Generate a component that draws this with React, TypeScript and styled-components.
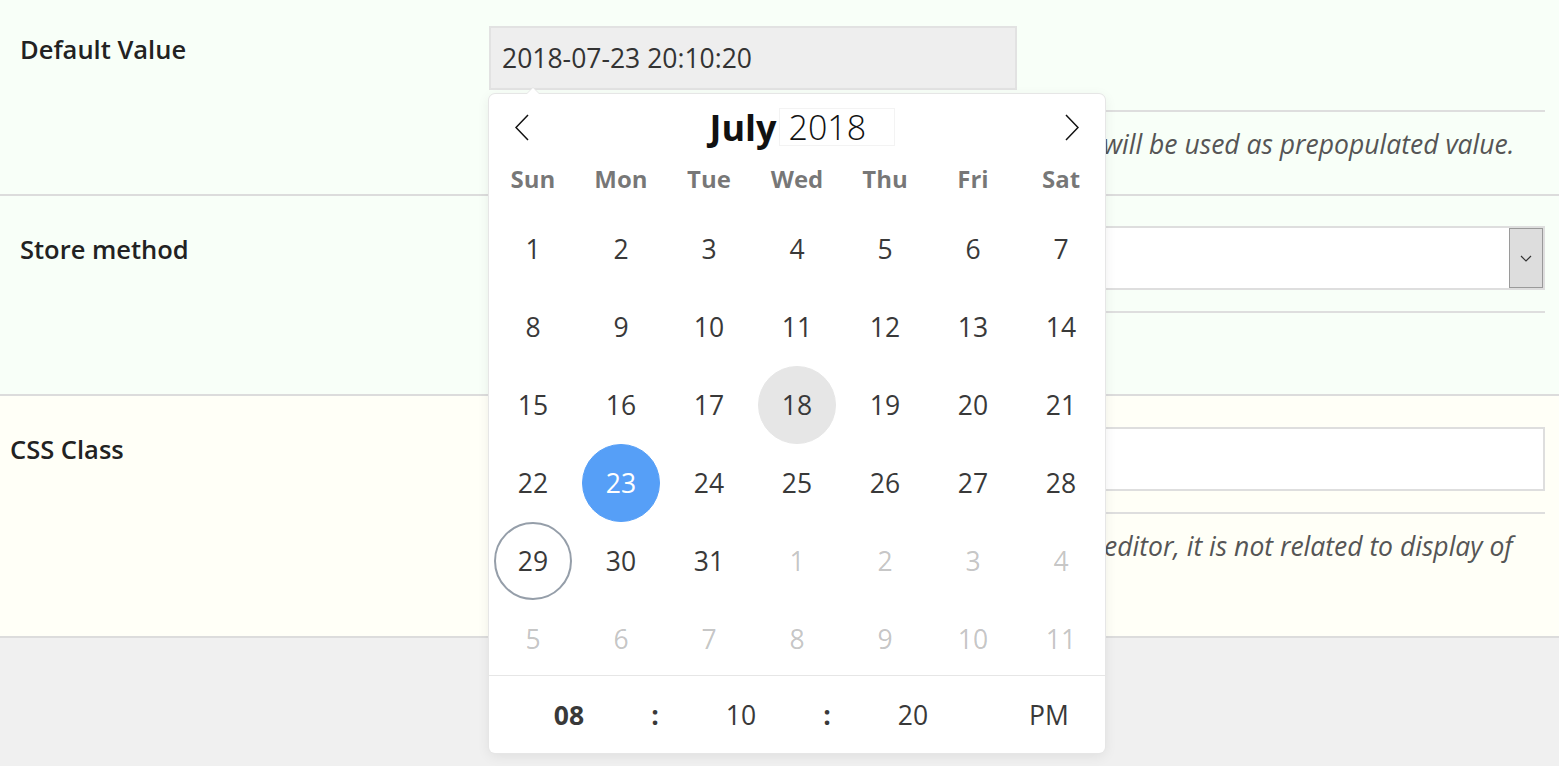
import React from 'react';
import styled, { createGlobalStyle, css } from 'styled-components';

const GlobalStyle = createGlobalStyle`
  html, body {
    margin: 0;
    padding: 0;
    background: #f0f0f0;
  }
  body {
    font-family: "Open Sans", "Noto Sans", "Liberation Sans", sans-serif;
    color: #222;
  }
`;

const Page = styled.div`
  position: relative;
  width: 1559px;
  height: 766px;
  overflow: hidden;
  background: #f0f0f0;
`;

const Row = styled.section<{ $bg: string; $minHeight: number; $padTop: number }>`
  display: grid;
  grid-template-columns: 489px 1fr;
  min-height: ${p => p.$minHeight}px;
  box-sizing: border-box;
  padding: ${p => p.$padTop}px 14px 0 0;
  background: ${p => p.$bg};
  border-bottom: 2px solid #dcdcdc;
`;

const Label = styled.div<{ $indent: number; $top: number }>`
  padding-left: ${p => p.$indent}px;
  margin-top: ${p => p.$top}px;
  font-size: 25.5px;
  font-weight: 600;
  line-height: 34px;
  color: #222;
`;

const Field = styled.div`
  display: flex;
  flex-direction: column;
`;

const controlBox = css`
  box-sizing: border-box;
  height: 64px;
  border: 2px solid #dedede;
`;

const TextInput = styled.div<{ $readonly?: boolean; $width?: number }>`
  ${controlBox};
  width: ${p => (p.$width ? `${p.$width}px` : '100%')};
  background: ${p => (p.$readonly ? '#eeeeee' : '#ffffff')};
  border-color: ${p => (p.$readonly ? '#e2e2e2' : '#dedede')};
  display: flex;
  align-items: center;
  padding-left: 11px;
  font-size: 26.5px;
  color: #333;
`;

const Select = styled.div`
  ${controlBox};
  background: #fff;
  display: flex;
  justify-content: flex-end;
  align-items: stretch;
`;

const DropButton = styled.div`
  width: 34px;
  box-sizing: border-box;
  background: #dddddd;
  border: 1px solid #9a9a9a;
  display: flex;
  align-items: center;
  justify-content: center;
`;

const Rule = styled.div<{ $gap: number }>`
  height: 2px;
  background: #dedede;
  margin-top: ${p => p.$gap}px;
`;

const Help = styled.p`
  margin: 15px 0 0;
  font-size: 26.5px;
  line-height: 34px;
  font-style: italic;
  color: #555;
`;

/* ---------- calendar popup ---------- */

const Calendar = styled.div`
  position: absolute;
  left: 489px;
  top: 94px;
  width: 616px;
  height: 659px;
  background: #fff;
  border-radius: 6px;
  box-shadow: 1px 0 0 #e6e6e6, -1px 0 0 #e6e6e6, 0 1px 0 #e6e6e6,
    0 -1px 0 #e6e6e6, 0 3px 13px rgba(0, 0, 0, 0.08);
  display: flex;
  flex-direction: column;

  &::before,
  &::after {
    content: '';
    position: absolute;
    left: 44px;
    border: solid transparent;
    height: 0;
    width: 0;
    transform: translateX(-50%);
  }
  &::before {
    bottom: 100%;
    border-width: 7px;
    border-bottom-color: #e6e6e6;
  }
  &::after {
    bottom: 100%;
    border-width: 6px;
    border-bottom-color: #fff;
  }
`;

const MonthBar = styled.div`
  height: 66px;
  display: grid;
  grid-template-columns: 66px 1fr 66px;
  align-items: center;
`;

const NavArrow = styled.div`
  display: flex;
  align-items: center;
  justify-content: center;
`;

const MonthTitle = styled.div`
  display: flex;
  justify-content: center;
  align-items: center;
  padding-left: 10px;
  font-size: 36px;
  color: #111;
`;

const MonthName = styled.span`
  font-weight: 700;
  margin-right: 2px;
`;

const YearBox = styled.span`
  box-sizing: border-box;
  width: 116px;
  height: 38px;
  display: flex;
  align-items: center;
  padding-left: 9px;
  font-size: 34px;
  font-weight: 300;
  border: 1px solid #f3f3f3;
`;

const Weekdays = styled.div`
  height: 40px;
  display: grid;
  grid-template-columns: repeat(7, 88px);
  align-items: center;
  margin: -2px 0 12px;
`;

const Weekday = styled.span`
  text-align: center;
  font-size: 24px;
  font-weight: 700;
  color: rgba(0, 0, 0, 0.54);
`;

const Days = styled.div`
  display: grid;
  height: 465px;
  grid-template-columns: repeat(7, 88px);
  grid-auto-rows: 78px;
`;

type DayKind = 'normal' | 'other' | 'selected' | 'today' | 'hover';

const Day = styled.span<{ $kind: DayKind }>`
  justify-self: center;
  align-self: center;
  box-sizing: border-box;
  width: 78px;
  height: 78px;
  border-radius: 50%;
  display: flex;
  align-items: center;
  justify-content: center;
  font-size: 26.5px;
  color: #393939;
  border: 1px solid transparent;
  ${p => p.$kind === 'other' && css`color: rgba(57, 57, 57, 0.3);`}
  ${p => p.$kind === 'selected' && css`background: #569ff7; border-color: #569ff7; color: #fff;`}
  ${p => p.$kind === 'today' && css`border: 2px solid #959ea9;`}
  ${p => p.$kind === 'hover' && css`background: #e6e6e6; border-color: #e6e6e6;`}
`;

const TimeBar = styled.div`
  flex: 1;
  border-top: 1px solid #e6e6e6;
  display: grid;
  grid-template-columns: 160px 12px 160px 12px 160px 1fr;
  align-items: center;
  font-size: 26.5px;
  color: #393939;
`;

const TimeCell = styled.span<{ $bold?: boolean }>`
  text-align: center;
  font-weight: ${p => (p.$bold ? 700 : 400)};
`;

const Chevron = ({ dir }: { dir: 'left' | 'right' }) => (
  <svg width="14" height="27" viewBox="0 0 14 27">
    <polyline
      points={dir === 'left' ? '13,1 1,13.5 13,26' : '1,1 13,13.5 1,26'}
      fill="none"
      stroke="#111"
      strokeWidth="1.5"
    />
  </svg>
);

const weekdays = ['Sun', 'Mon', 'Tue', 'Wed', 'Thu', 'Fri', 'Sat'];

const buildDays = () => {
  const cells: { n: number; kind: DayKind }[] = [];
  for (let d = 1; d <= 31; d++) {
    let kind: DayKind = 'normal';
    if (d === 23) kind = 'selected';
    if (d === 18) kind = 'hover';
    if (d === 29) kind = 'today';
    cells.push({ n: d, kind });
  }
  for (let d = 1; d <= 11; d++) cells.push({ n: d, kind: 'other' });
  return cells;
};

const DatePopup = () => (
  <Calendar>
    <MonthBar>
      <NavArrow><Chevron dir="left" /></NavArrow>
      <MonthTitle>
        <MonthName>July</MonthName>
        <YearBox>2018</YearBox>
      </MonthTitle>
      <NavArrow><Chevron dir="right" /></NavArrow>
    </MonthBar>
    <Weekdays>
      {weekdays.map(w => <Weekday key={w}>{w}</Weekday>)}
    </Weekdays>
    <Days>
      {buildDays().map((c, i) => (
        <Day key={i} $kind={c.kind}>{c.n}</Day>
      ))}
    </Days>
    <TimeBar>
      <TimeCell $bold>08</TimeCell>
      <TimeCell $bold>:</TimeCell>
      <TimeCell>10</TimeCell>
      <TimeCell $bold>:</TimeCell>
      <TimeCell>20</TimeCell>
      <TimeCell>PM</TimeCell>
    </TimeBar>
  </Calendar>
);

export default function App() {
  return (
    <Page>
      <GlobalStyle />
      <Row $bg="#f8fff8" $minHeight={196} $padTop={26}>
        <Label $indent={20} $top={6}>Default Value</Label>
        <Field>
          <TextInput $readonly $width={528}>2018-07-23 20:10:20</TextInput>
          <Rule $gap={20} />
          <Help>Date and time that you enter here for any new entry will be used as prepopulated value.</Help>
        </Field>
      </Row>
      <Row $bg="#f8fff8" $minHeight={200} $padTop={30}>
        <Label $indent={20} $top={6}>Store method</Label>
        <Field>
          <Select>
            <DropButton>
              <svg width="12" height="7" viewBox="0 0 12 7">
                <polyline points="1,1 6,6 11,1" fill="none" stroke="#333" strokeWidth="1.2" />
              </svg>
            </DropButton>
          </Select>
          <Rule $gap={21} />
        </Field>
      </Row>
      <Row $bg="#fffff7" $minHeight={242} $padTop={31}>
        <Label $indent={10} $top={5}>CSS Class</Label>
        <Field>
          <TextInput />
          <Rule $gap={21} />
          <Help>This class is put on the field wrapper inside the form editor, it is not related to display of the field on the front end.</Help>
        </Field>
      </Row>
      <DatePopup />
    </Page>
  );
}
